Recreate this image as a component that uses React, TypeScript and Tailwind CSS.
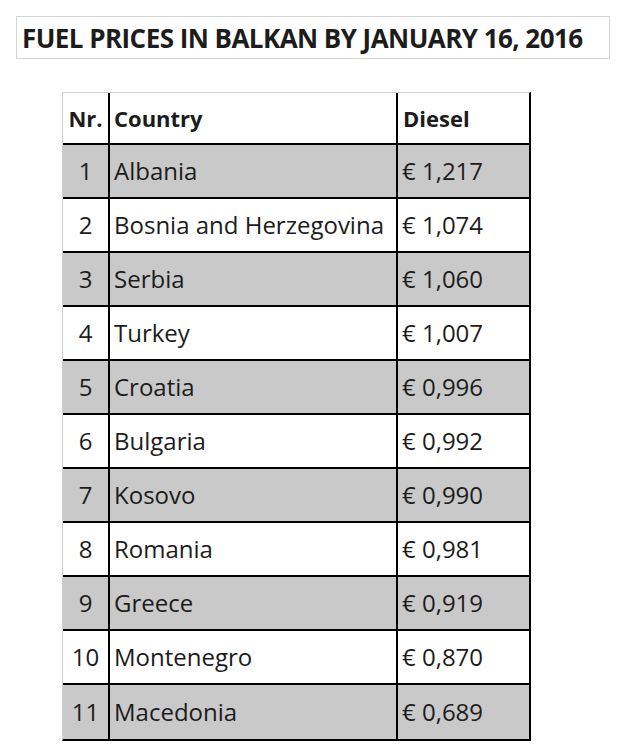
const rows: [number, string, string][] = [
  [1, 'Albania', '€ 1,217'],
  [2, 'Bosnia and Herzegovina', '€ 1,074'],
  [3, 'Serbia', '€ 1,060'],
  [4, 'Turkey', '€ 1,007'],
  [5, 'Croatia', '€ 0,996'],
  [6, 'Bulgaria', '€ 0,992'],
  [7, 'Kosovo', '€ 0,990'],
  [8, 'Romania', '€ 0,981'],
  [9, 'Greece', '€ 0,919'],
  [10, 'Montenegro', '€ 0,870'],
  [11, 'Macedonia', '€ 0,689'],
];

export default function App() {
  return (
    <div className="w-[620px] h-[754px] bg-white text-[#1c1c1c] font-['Open_Sans',sans-serif] overflow-hidden">
      {/* Title */}
      <div className="pt-[16px] pl-[16px]">
        <div className="w-[594px] h-[43px] border border-[#d4d4d4] flex items-center pl-[5px]">
          <h1 className="text-[26px] font-bold tracking-[-0.55px] leading-none whitespace-nowrap">
            FUEL PRICES IN BALKAN BY JANUARY 16, 2016
          </h1>
        </div>
      </div>

      {/* Table */}
      <div className="pt-[33px] pl-[62px]">
        <div className="w-[469px] border-t border-l border-[#d0d0d0] border-r-2 border-r-black border-b-2 border-b-black">
          <div className="grid grid-cols-[47px_288px_1fr] h-[52px] border-b-2 border-black text-[22px] font-bold">
            <div className="flex items-center justify-center border-r-2 border-black">Nr.</div>
            <div className="flex items-center pl-[4px] border-r-2 border-black">Country</div>
            <div className="flex items-center pl-[5px]">Diesel</div>
          </div>
          {rows.map(([n, country, price], i) => (
            <div
              key={n}
              className={`grid grid-cols-[47px_288px_1fr] h-[54px] text-[24px] ${
                i < rows.length - 1 ? 'border-b-2 border-black' : ''
              } ${i % 2 === 0 ? 'bg-[#c9c9c9]' : 'bg-white'}`}
            >
              <div className="flex items-center justify-center border-r-2 border-black">{n}</div>
              <div className="flex items-center pl-[4px] border-r-2 border-black whitespace-nowrap">{country}</div>
              <div className="flex items-center pl-[4px]">{price}</div>
            </div>
          ))}
        </div>
      </div>
    </div>
  );
}
